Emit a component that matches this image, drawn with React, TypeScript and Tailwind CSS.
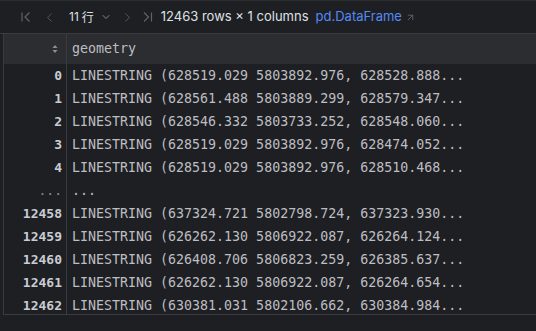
import { ChevronDown, ChevronLeft, ChevronRight, ArrowUpRight } from "lucide-react";

const rows: [string, string][] = [
  ["0", "LINESTRING (628519.029 5803892.976, 628528.888..."],
  ["1", "LINESTRING (628561.488 5803889.299, 628579.347..."],
  ["2", "LINESTRING (628546.332 5803733.252, 628548.060..."],
  ["3", "LINESTRING (628519.029 5803892.976, 628474.052..."],
  ["4", "LINESTRING (628519.029 5803892.976, 628510.468..."],
  ["...", "..."],
  ["12458", "LINESTRING (637324.721 5802798.724, 637323.930..."],
  ["12459", "LINESTRING (626262.130 5806922.087, 626264.124..."],
  ["12460", "LINESTRING (626408.706 5806823.259, 626385.637..."],
  ["12461", "LINESTRING (626262.130 5806922.087, 626264.654..."],
  ["12462", "LINESTRING (630381.031 5802106.662, 630384.984..."],
];

function FirstIcon() {
  return (
    <svg width="12" height="14" viewBox="0 0 12 14" fill="none" stroke="#5f6268" strokeWidth="1.2">
      <path d="M2 2.5v9" />
      <path d="M9.5 2.5 5 7l4.5 4.5" />
    </svg>
  );
}

function LastIcon() {
  return (
    <svg width="12" height="14" viewBox="0 0 12 14" fill="none" stroke="#5f6268" strokeWidth="1.2">
      <path d="M9.5 2.5v9" />
      <path d="M2 2.5 6.5 7 2 11.5" />
    </svg>
  );
}

function SortIcon() {
  return (
    <svg width="8" height="10" viewBox="0 0 8 10" fill="#8c8f95">
      <path d="M4 1 6.5 4h-5z" />
      <path d="M4 9 1.5 6h5z" />
    </svg>
  );
}

export default function App() {
  return (
    <div className="w-[536px] h-[331px] bg-[#1e1f22] overflow-hidden font-['Inter',sans-serif]">
      {/* Toolbar */}
      <div className="h-[34px] flex items-center border-b border-[#393b40] border-t border-t-[#2b2d30] pl-[20px] text-[#bcbec4]">
        <FirstIcon />
        <ChevronLeft size={15} strokeWidth={1.3} className="ml-[10px] text-[#5f6268]" />
        <div className="ml-[12px] flex items-center text-[12px] text-[#dfe1e5]">
          <span>11</span>
          <span className="ml-[3px] font-['Noto_Sans_CJK_SC',sans-serif]">行</span>
          <ChevronDown size={12} strokeWidth={1.6} className="ml-[6px] text-[#9da0a8]" />
        </div>
        <ChevronRight size={15} strokeWidth={1.3} className="ml-[8px] text-[#5f6268]" />
        <div className="ml-[7px]">
          <LastIcon />
        </div>
        <span className="ml-[7px] text-[13px] text-[#dfe1e5]">12463 rows × 1 columns</span>
        <span className="ml-[7px] text-[13px] text-[#548af7]">pd.DataFrame</span>
        <ArrowUpRight size={11} strokeWidth={1.6} className="ml-[3px] text-[#6f737a]" />
      </div>

      {/* Table */}
      <div className="ml-[3px] border-l border-b border-[#393b40] font-['DejaVu_Sans_Mono',monospace] text-[13.3px] text-[#bcbec4]">
        <div className="h-[30px] flex bg-[#2b2d30]">
          <div className="w-[63px] flex items-center justify-end pr-[7px] border-r border-[#393b40]">
            <SortIcon />
          </div>
          <div className="flex items-center pl-[5px] text-[#bcbec4]">geometry</div>
        </div>
        {rows.map(([idx, val], i) => (
          <div key={i} className={`flex overflow-hidden ${i === rows.length - 1 ? "h-[20px]" : "h-[23px]"}`}>
            <div className="w-[63px] shrink-0 h-[23px] flex items-center justify-end pr-[4px] border-r border-[#393b40] font-bold text-[#c9ccd2] text-[13px]">
              {idx === "..." ? <span className="font-normal text-[#8c8f95]">...</span> : idx}
            </div>
            <div className="h-[23px] flex items-center pl-[5px] whitespace-pre">{val}</div>
          </div>
        ))}
      </div>
    </div>
  );
}
